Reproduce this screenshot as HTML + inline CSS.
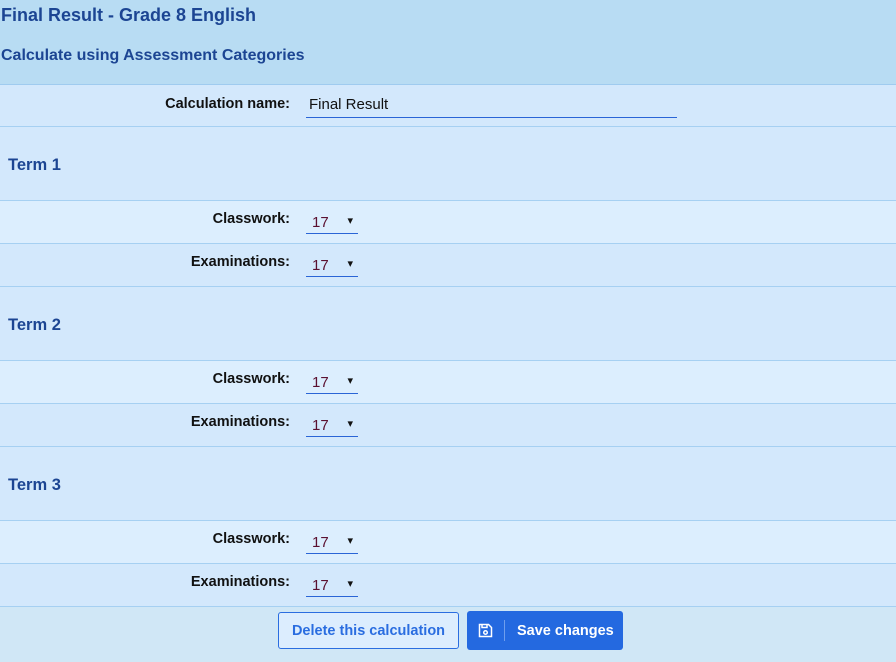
<!DOCTYPE html><html><head><style>
*{margin:0;padding:0;box-sizing:border-box}
body{width:896px;height:662px;overflow:hidden;background:#d3e8fc;font-family:"Liberation Sans",sans-serif;position:relative}
.a{position:absolute}
.hd{left:0;top:0;width:896px;height:85px;background:#b8dcf3;border-bottom:1px solid #9fcbef}
h1{position:absolute;left:1px;top:5px;font-size:18px;color:#1c4593;font-weight:bold}
h2{position:absolute;left:1px;top:47px;font-size:16px;color:#1c4593;font-weight:bold}
.row{position:absolute;left:0;width:896px;border-bottom:1px solid #a6d0f2}
.lbl{position:absolute;right:606px;font-size:14.5px;font-weight:bold;color:#111}
.sel{position:absolute;left:306px;width:52px;height:23px;border-bottom:1px solid #2a65d6;font-size:15px;color:#5a1030;padding-left:6px;padding-top:3px}
.sel:after{content:"▾";position:absolute;right:5px;top:3px;color:#111;font-size:11px}
.term{position:absolute;left:8px;font-size:16.5px;font-weight:bold;color:#1c4593}
</style></head><body>
<div class="a hd"><h1>Final Result - Grade 8 English</h1><h2>Calculate using Assessment Categories</h2></div>
<div class="row" style="top:86px;height:41px;background:#d3e8fc"><div class="lbl" style="top:10px">Calculation name:</div><div class="a" style="left:306px;top:10px;width:371px;height:22px;border-bottom:1px solid #2a65d6;font-size:15px;color:#111;padding-left:3px">Final Result</div></div>

<div class="row" style="top:127px;height:74px;background:#d3e8fc"><div class="term" style="top:29px">Term 1</div></div>
<div class="row" style="top:201px;height:43px;background:#dceefe"><div class="lbl" style="top:10px">Classwork:</div><div class="sel" style="top:10px">17</div></div>
<div class="row" style="top:244px;height:43px;background:#d3e8fc"><div class="lbl" style="top:10px">Examinations:</div><div class="sel" style="top:10px">17</div></div>

<div class="row" style="top:287px;height:74px;background:#d3e8fc"><div class="term" style="top:29px">Term 2</div></div>
<div class="row" style="top:361px;height:43px;background:#dceefe"><div class="lbl" style="top:10px">Classwork:</div><div class="sel" style="top:10px">17</div></div>
<div class="row" style="top:404px;height:43px;background:#d3e8fc"><div class="lbl" style="top:10px">Examinations:</div><div class="sel" style="top:10px">17</div></div>

<div class="row" style="top:447px;height:74px;background:#d3e8fc"><div class="term" style="top:29px">Term 3</div></div>
<div class="row" style="top:521px;height:43px;background:#dceefe"><div class="lbl" style="top:10px">Classwork:</div><div class="sel" style="top:10px">17</div></div>
<div class="row" style="top:564px;height:43px;background:#d3e8fc"><div class="lbl" style="top:10px">Examinations:</div><div class="sel" style="top:10px">17</div></div>

<div class="a" style="left:0;top:607px;width:896px;height:55px;background:#d0e7f6"></div>
<div class="a" style="left:278px;top:612px;width:181px;height:37px;border:1px solid #2a6de0;border-radius:3px;background:#dcedfe;color:#2a6de0;font-size:14.5px;font-weight:bold;text-align:center;line-height:37px">Delete this calculation</div>
<div class="a" style="left:467px;top:611px;width:156px;height:39px;border-radius:3px;background:#2469e0;color:#fff;font-size:14.5px;font-weight:bold;line-height:41px">
<svg class="a" style="left:11px;top:12px" width="15" height="15" viewBox="0 0 15 15" fill="none" stroke="#fff" stroke-width="1.5"><path d="M1.5 1.5h9l3 3v9h-12z"/><path d="M4 1.5v3h5v-3"/><circle cx="7.5" cy="9.5" r="1.8"/></svg>
<div class="a" style="left:37px;top:9px;width:1px;height:21px;background:#6f9eed"></div>
<span class="a" style="left:50px;top:0">Save changes</span></div>
</body></html>
